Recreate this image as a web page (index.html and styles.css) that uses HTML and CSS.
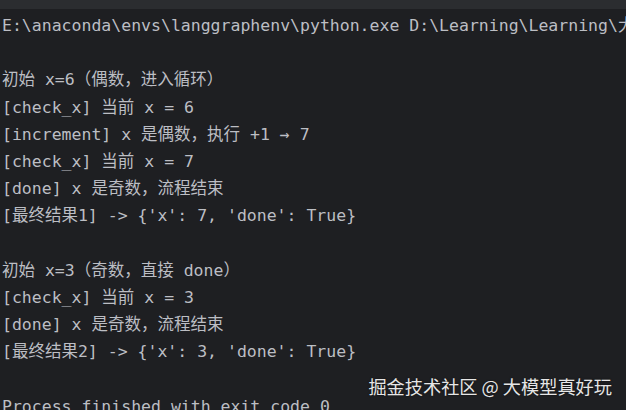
FILE: index.html
```html
<!DOCTYPE html>
<html lang="zh">
<head>
<meta charset="utf-8">
<link rel="stylesheet" href="styles.css">
</head>
<body>
<div class="console">
  <div class="topbar"></div>
  <div class="output">
<div class="line">E:\anaconda\envs\langgraphenv\python.exe D:\Learning\Learning\大模型\langgraph_demo.py</div>
<div class="line"> </div>
<div class="line">初始 x=6（偶数，进入循环）</div>
<div class="line">[check_x] 当前 x = 6</div>
<div class="line">[increment] x 是偶数，执行 +1 → 7</div>
<div class="line">[check_x] 当前 x = 7</div>
<div class="line">[done] x 是奇数，流程结束</div>
<div class="line">[最终结果1] -&gt; {'x': 7, 'done': True}</div>
<div class="line"> </div>
<div class="line">初始 x=3（奇数，直接 done）</div>
<div class="line">[check_x] 当前 x = 3</div>
<div class="line">[done] x 是奇数，流程结束</div>
<div class="line">[最终结果2] -&gt; {'x': 3, 'done': True}</div>
<div class="line"> </div>
<div class="line">Process finished with exit code 0</div>
  </div>
  <div class="watermark">掘金技术社区 @ 大模型真好玩</div>
</div>
</body>
</html>
```
FILE: styles.css
```css
html, body {
  margin: 0;
  padding: 0;
  background: #1e1f22;
}
.console {
  position: relative;
  width: 626px;
  height: 410px;
  overflow: hidden;
  background: #1e1f22;
}
.topbar {
  height: 9px;
  background: #2b2d30;
}
.output {
  padding: 3px 0 0 2px;
  font-family: "DejaVu Sans Mono", "Noto Sans CJK SC", monospace;
  font-size: 16.5px;
  line-height: 27.2px;
  color: #bcbec4;
}
.line {
  white-space: pre;
  overflow: hidden;
  height: 27.2px;
}
.watermark {
  position: absolute;
  right: 14px;
  top: 373px;
  font-family: "Noto Sans CJK SC", sans-serif;
  font-size: 18.2px;
  line-height: 26px;
  color: #e6e6e6;
  text-shadow: 0 0 2px rgba(0,0,0,0.6);
}
```
